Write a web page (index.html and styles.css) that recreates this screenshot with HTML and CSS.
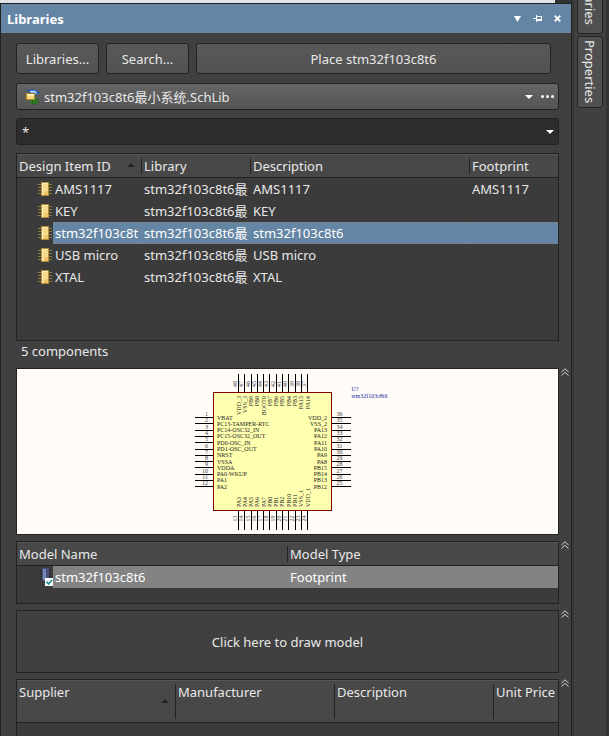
FILE: index.html
```html
<!DOCTYPE html>
<html lang="en">
<head>
<meta charset="utf-8">
<meta name="viewport" content="width=device-width, initial-scale=1">
<title>Libraries</title>
<link rel="stylesheet" href="styles.css">
</head>
<body>
<svg class="defs" aria-hidden="true">
  <symbol id="chip" viewBox="0 0 14 14">
    <path d="M0 2.500h14M0 5.500h14M0 8.500h14M0 11.500h14" stroke="#8d7c37"/>
    <path d="M3 0h8v14H3z" fill="#b08d38"/>
    <path d="M4 1h6v12H4z" fill="#f6d98a"/>
    <path d="M4 1h6v1H4zM4 2h1v11H4z" fill="#fdeec0"/>
    <path d="M7 9h3v4H6z" fill="#efc566"/>
  </symbol>
  <symbol id="up" viewBox="0 0 8 8">
    <path d="M.5 4 4 .8 7.500 4M.5 7.500 4 4.300 7.500 7.500" fill="none" stroke="#d0d0d0"/>
  </symbol>
  <symbol id="caret" viewBox="0 0 8 4"><path d="M0 0h8L4 4z" fill="#fff"/></symbol>
  <symbol id="sort" viewBox="0 0 8 4"><path d="M0 4h8L4 0z" fill="#222"/></symbol>
</svg>
<div class="app">
  <main class="dock">
    <div class="strip"></div>
    <section class="panel">
      <header class="titlebar">
        <h1>Libraries</h1>
        <button class="tool" aria-label="Panel menu"><svg width="7" height="6" viewBox="0 0 7 6"><path d="M0 0h7L3.500 6z" fill="#fff"/></svg></button>
        <button class="tool" aria-label="Pin"><svg width="9" height="7" viewBox="0 0 9 7"><path d="M0 3h3V0h1v1h5v5H4v1H3V4H0zM4 2v2h4V2z" fill="#fff" fill-rule="evenodd"/></svg></button>
        <button class="tool" aria-label="Close"><svg width="7" height="7" viewBox="0 0 7 7"><path d="m.7.7 5.600 5.600m0-5.600L.7 6.300" stroke="#fff" stroke-width="1.800"/></svg></button>
      </header>
      <div class="content">
        <div class="actions">
          <button class="btn">Libraries...</button>
          <button class="btn">Search...</button>
          <button class="btn btn-wide">Place stm32f103c8t6</button>
        </div>
        <div class="field library">
          <svg class="lib-icon" width="16" height="16" viewBox="0 0 16 16" aria-hidden="true">
            <path d="M2 1.500h4M12 3.500h4" stroke="#1554b8"/>
            <path d="M6 1h5q2 0 3 3-1 2-3 2H6z" fill="#78a8f0" stroke="#1c50b0"/>
            <path d="M6 2h5l1 1H6z" fill="#c4dcff"/>
            <path d="M5 10.500h10M5 13.500h10" stroke="#1d6a18"/>
            <path d="M7 9h6v6H7z" fill="#2c8420"/>
            <path d="M8.500 11v5M11.500 11v5" stroke="#1b5c16"/>
            <path d="M0 6.500h12M0 9.500h12" stroke="#7d651c"/>
            <path d="M2.500 4.500h8v6h-8z" fill="#f6d878" stroke="#a98424"/>
            <path d="M3 5h7v2H3z" fill="#fff0ba"/>
          </svg>
          <select aria-label="Library"><option>stm32f103c8t6最小系统.SchLib</option></select>
          <svg class="caret" width="8" height="4"><use href="#caret"/></svg>
          <button class="more" aria-label="More"><svg width="13" height="3" viewBox="0 0 13 3"><circle cx="1.500" cy="1.500" r="1.500" fill="#fff"/><circle cx="6.500" cy="1.500" r="1.500" fill="#fff"/><circle cx="11.500" cy="1.500" r="1.500" fill="#fff"/></svg></button>
        </div>
        <div class="field filter">
          <input type="text" value="*" aria-label="Filter">
          <button class="more" aria-label="Filter history"><svg width="8" height="4"><use href="#caret"/></svg></button>
        </div>
        <div class="box components">
          <table>
            <colgroup><col class="c-icon"><col class="c-name"><col class="c-lib"><col><col class="c-foot"></colgroup>
            <thead><tr><th colspan="2">Design Item ID<svg class="sort" width="8" height="4"><use href="#sort"/></svg></th><th>Library</th><th>Description</th><th>Footprint</th></tr></thead>
            <tbody>
              <tr><td class="icon"><svg width="14" height="14"><use href="#chip"/></svg></td><td class="name"><span>AMS1117</span></td><td><span>stm32f103c8t6最</span></td><td><span>AMS1117</span></td><td><span>AMS1117</span></td></tr>
              <tr><td class="icon"><svg width="14" height="14"><use href="#chip"/></svg></td><td class="name"><span>KEY</span></td><td><span>stm32f103c8t6最</span></td><td><span>KEY</span></td><td></td></tr>
              <tr class="selected"><td class="icon"><svg width="14" height="14"><use href="#chip"/></svg></td><td class="name"><span>stm32f103c8t</span></td><td><span>stm32f103c8t6最</span></td><td><span>stm32f103c8t6</span></td><td></td></tr>
              <tr><td class="icon"><svg width="14" height="14"><use href="#chip"/></svg></td><td class="name"><span>USB micro</span></td><td><span>stm32f103c8t6最</span></td><td><span>USB micro</span></td><td></td></tr>
              <tr><td class="icon"><svg width="14" height="14"><use href="#chip"/></svg></td><td class="name"><span>XTAL</span></td><td><span>stm32f103c8t6最</span></td><td><span>XTAL</span></td><td></td></tr>
            </tbody>
          </table>
        </div>
        <p class="status">5 components</p>
        <div class="section">
          <div class="box preview">
            <svg viewBox="0 0 1082 330" role="img" aria-label="Schematic symbol">
              <rect x="393" y="47" width="236" height="236" fill="#ffffb0" stroke="#800000" stroke-width="2"/>
              <path class="pins" d="M356 97h36M356 109h36M356 122h36M356 134h36M356 147h36M356 160h36M356 172h36M356 185h36M356 197h36M356 210h36M356 222h36M356 235h36M630 97h37M630 109h37M630 122h37M630 134h37M630 147h37M630 160h37M630 172h37M630 185h37M630 197h37M630 210h37M630 222h37M630 235h37M443 10v36M455 10v36M468 10v36M480 10v36M493 10v36M505 10v36M518 10v36M530 10v36M543 10v36M556 10v36M568 10v36M581 10v36M443 284v37M455 284v37M468 284v37M480 284v37M493 284v37M505 284v37M518 284v37M530 284v37M543 284v37M556 284v37M568 284v37M581 284v37"/>
              <text><tspan x="400" y="101">VBAT</tspan><tspan x="400" y="113">PC13-TAMPER-RTC</tspan><tspan x="400" y="126">PC14-OSC32_IN</tspan><tspan x="400" y="138">PC15-OSC32_OUT</tspan><tspan x="400" y="151">PD0-OSC_IN</tspan><tspan x="400" y="164">PD1-OSC_OUT</tspan><tspan x="400" y="176">NRST</tspan><tspan x="400" y="189">VSSA</tspan><tspan x="400" y="201">VDDA</tspan><tspan x="400" y="214">PA0-WKUP</tspan><tspan x="400" y="226">PA1</tspan><tspan x="400" y="239">PA2</tspan></text>
              <text class="end"><tspan x="620" y="101">VDD_2</tspan><tspan x="620" y="113">VSS_2</tspan><tspan x="620" y="126">PA13</tspan><tspan x="620" y="138">PA12</tspan><tspan x="620" y="151">PA11</tspan><tspan x="620" y="164">PA10</tspan><tspan x="620" y="176">PA9</tspan><tspan x="620" y="189">PA8</tspan><tspan x="620" y="201">PB15</tspan><tspan x="620" y="214">PB14</tspan><tspan x="620" y="226">PB13</tspan><tspan x="620" y="239">PB12</tspan></text>
              <text class="end num"><tspan x="382" y="94">1</tspan><tspan x="382" y="106">2</tspan><tspan x="382" y="119">3</tspan><tspan x="382" y="131">4</tspan><tspan x="382" y="144">5</tspan><tspan x="382" y="157">6</tspan><tspan x="382" y="169">7</tspan><tspan x="382" y="182">8</tspan><tspan x="382" y="194">9</tspan><tspan x="382" y="207">10</tspan><tspan x="382" y="219">11</tspan><tspan x="382" y="232">12</tspan></text>
              <text class="num"><tspan x="639" y="94">36</tspan><tspan x="639" y="106">35</tspan><tspan x="639" y="119">34</tspan><tspan x="639" y="131">33</tspan><tspan x="639" y="144">32</tspan><tspan x="639" y="157">31</tspan><tspan x="639" y="169">30</tspan><tspan x="639" y="182">29</tspan><tspan x="639" y="194">28</tspan><tspan x="639" y="207">27</tspan><tspan x="639" y="219">26</tspan><tspan x="639" y="232">25</tspan></text>
              <g transform="rotate(-90)">
                <text class="end"><tspan x="-54" y="447">VDD_3</tspan><tspan x="-54" y="459">VSS_3</tspan><tspan x="-54" y="472">PB9</tspan><tspan x="-54" y="484">PB8</tspan><tspan x="-54" y="497">BOOT0</tspan><tspan x="-54" y="509">PB7</tspan><tspan x="-54" y="522">PB6</tspan><tspan x="-54" y="534">PB5</tspan><tspan x="-54" y="547">PB4</tspan><tspan x="-54" y="560">PB3</tspan><tspan x="-54" y="572">PA15</tspan><tspan x="-54" y="585">PA14</tspan></text>
                <text><tspan x="-276" y="447">PA3</tspan><tspan x="-276" y="459">PA4</tspan><tspan x="-276" y="472">PA5</tspan><tspan x="-276" y="484">PA6</tspan><tspan x="-276" y="497">PA7</tspan><tspan x="-276" y="509">PB0</tspan><tspan x="-276" y="522">PB1</tspan><tspan x="-276" y="534">PB2</tspan><tspan x="-276" y="547">PB10</tspan><tspan x="-276" y="560">PB11</tspan><tspan x="-276" y="572">VSS_1</tspan><tspan x="-276" y="585">VDD_1</tspan></text>
                <text class="num"><tspan x="-36" y="440">48</tspan><tspan x="-36" y="452">47</tspan><tspan x="-36" y="465">46</tspan><tspan x="-36" y="477">45</tspan><tspan x="-36" y="490">44</tspan><tspan x="-36" y="502">43</tspan><tspan x="-36" y="515">42</tspan><tspan x="-36" y="527">41</tspan><tspan x="-36" y="540">40</tspan><tspan x="-36" y="553">39</tspan><tspan x="-36" y="565">38</tspan><tspan x="-36" y="578">37</tspan></text>
                <text class="num"><tspan x="-305" y="440">13</tspan><tspan x="-305" y="452">14</tspan><tspan x="-305" y="465">15</tspan><tspan x="-305" y="477">16</tspan><tspan x="-305" y="490">17</tspan><tspan x="-305" y="502">18</tspan><tspan x="-305" y="515">19</tspan><tspan x="-305" y="527">20</tspan><tspan x="-305" y="540">21</tspan><tspan x="-305" y="553">22</tspan><tspan x="-305" y="565">23</tspan><tspan x="-305" y="578">24</tspan></text>
              </g>
              <text class="ref"><tspan x="669" y="44">U?</tspan><tspan x="669" y="57">stm32f103c8t6</tspan></text>
            </svg>
          </div>
          <button class="collapse" aria-label="Collapse preview"><svg width="8" height="8"><use href="#up"/></svg></button>
        </div>
        <div class="section">
          <div class="box models">
            <table>
              <colgroup><col class="c-icon"><col class="c-model"><col></colgroup>
              <thead><tr><th colspan="2">Model Name</th><th>Model Type</th></tr></thead>
              <tbody><tr class="active"><td class="icon model-icon"><svg width="13" height="18" viewBox="0 0 13 18"><path d="M0 2.500h11M0 5.500h11M0 8.500h11M0 11.500h11" stroke="#25253d"/><path d="M2 0h7v13H2z" fill="#485078"/><path d="M3 1h3v11H3z" fill="#7886b8"/><path d="M5 10h8v8H5z" fill="#fff"/><path d="m6.500 13.500 2 2.500 3.500-4" fill="none" stroke="#178c94" stroke-width="1.600"/></svg></td><td class="name"><span>stm32f103c8t6</span></td><td><span>Footprint</span></td></tr></tbody>
            </table>
          </div>
          <button class="collapse" aria-label="Collapse models"><svg width="8" height="8"><use href="#up"/></svg></button>
        </div>
        <div class="section">
          <button class="box draw">Click here to draw model</button>
          <button class="collapse" aria-label="Collapse model view"><svg width="8" height="8"><use href="#up"/></svg></button>
        </div>
        <div class="section fill">
          <div class="box suppliers">
            <table>
              <colgroup><col class="c-first"><col class="c-sup"><col class="c-sup"><col></colgroup>
              <thead><tr><th>Supplier<svg class="sort" width="8" height="4"><use href="#sort"/></svg></th><th>Manufacturer</th><th>Description</th><th>Unit Price</th></tr></thead>
            </table>
          </div>
          <button class="collapse" aria-label="Collapse suppliers"><svg width="8" height="8"><use href="#up"/></svg></button>
        </div>
      </div>
    </section>
  </main>
  <nav class="rail" aria-label="Panels">
    <button class="tab">Libraries</button>
    <button class="tab">Properties</button>
  </nav>
</div>
</body>
</html>
```
FILE: styles.css
```css
* {
  box-sizing: border-box;
}

body {
  margin: 0;
  background: #404040;
}

body,
button,
input,
select {
  color: #e8e8e8;
  font: 13px/20px "Noto Sans", "Noto Sans CJK SC", sans-serif;
}

button,
input,
select {
  margin: 0;
  padding: 0;
  border: 0;
  background: none;
}

svg {
  display: block;
}

.defs {
  position: absolute;
  width: 0;
  height: 0;
}

.app {
  display: flex;
  height: 100vh;
  min-height: 700px;
  overflow: hidden;
}

.dock {
  display: flex;
  flex: 1;
  flex-direction: column;
  min-width: 0;
  background: #333;
}

.strip {
  height: 3px;
  margin-right: 17px;
  background: #e2e2e6;
}

.panel {
  display: flex;
  flex: 1;
  flex-direction: column;
  border: 1px solid #222;
  border-bottom: 0;
  background: #404040;
}

.titlebar {
  display: flex;
  align-items: center;
  height: 29px;
  padding: 0 4px 0 6px;
  background: #6485a4;
}

.titlebar h1 {
  flex: 1;
  margin: 0;
  color: #fff;
  font-size: 13px;
  font-weight: 700;
}

.tool {
  display: grid;
  place-items: center;
  width: 20px;
  height: 20px;
}

.content {
  display: flex;
  flex: 1;
  flex-direction: column;
  padding: 10px 0 0 15px;
}

.actions {
  display: flex;
  gap: 7px;
  margin: 0 20px 9px 0;
}

.btn {
  width: 83px;
  height: 31px;
  border: 1px solid #222;
  border-radius: 3px;
  background: linear-gradient(#595959, #525252);
}

.btn-wide {
  flex: 1;
}

.field {
  display: flex;
  align-items: center;
  height: 27px;
  margin: 0 12px 8px 0;
  border: 1px solid #222;
  border-radius: 3px;
}

.library {
  padding: 0 4px 0 7px;
  background: linear-gradient(#656565, #545454);
}

.library select {
  flex: 1;
  min-width: 0;
  margin-left: 4px;
  appearance: none;
}

.filter {
  padding: 0 4px 0 5px;
  background: #2d2d2d;
}

.filter input {
  flex: 1;
  min-width: 0;
}

.more {
  display: flex;
  justify-content: flex-end;
}

.library .more {
  width: 21px;
}

.box {
  flex: 1;
  min-width: 0;
  border: 1px solid #222;
  background: #3b3b3b;
}

.components {
  flex: none;
  height: 188px;
  margin-right: 12px;
}

table {
  width: 100%;
  table-layout: fixed;
  border-spacing: 0;
}

.c-icon {
  width: 36px;
}

.c-name {
  width: 88px;
}

.c-lib {
  width: 109px;
}

.c-foot {
  width: 89px;
}

.c-model {
  width: 234px;
}

.c-first {
  width: 158px;
}

.c-sup {
  width: 159px;
}

th {
  position: relative;
  height: 24px;
  padding: 0 3px;
  border-top: 1px solid #565656;
  border-bottom: 1px solid #222;
  background: #484848;
  font-weight: 400;
  text-align: left;
  white-space: nowrap;
}

th:first-child {
  padding-left: 2px;
}

th + th::before {
  position: absolute;
  top: 3px;
  bottom: 3px;
  left: 0;
  width: 1px;
  background: #222;
  content: "";
}

.sort {
  position: absolute;
  right: 6px;
  top: 8px;
}

td {
  height: 22px;
  padding: 0 0 0 3px;
}

td span {
  display: block;
  overflow: hidden;
  white-space: nowrap;
}

.name {
  padding-left: 2px;
}

.icon {
  padding: 0 0 0 21px;
}

.model-icon {
  padding-left: 23px;
}

.selected td:not(.icon) {
  border: 0 dotted #8a8078;
  border-width: 1px 0;
  background: #6485a4;
  color: #fff;
}

.active td:not(.icon) {
  background: #838383;
  color: #fff;
}

.status {
  margin: 0 0 6px;
  padding-left: 5px;
  line-height: 21px;
}

.section {
  display: flex;
  align-items: flex-start;
  margin-bottom: 6px;
}

.preview {
  background: #fffcf8;
}

.preview svg {
  width: 100%;
  height: auto;
}

.preview text {
  fill: #222;
  font: 12px "Liberation Serif", serif;
}

.preview .end {
  text-anchor: end;
}

.preview .num {
  fill: #444;
}

.preview .ref {
  fill: #1c1c9c;
}

.pins {
  stroke: #000;
  stroke-width: 2;
  shape-rendering: crispEdges;
}

.collapse {
  display: flex;
  justify-content: center;
  width: 12px;
}

.models,
.draw {
  height: 63px;
}

.draw {
  background: #404040;
}

.fill {
  flex: 1;
  align-items: stretch;
  margin-bottom: 0;
}

.suppliers {
  border-bottom: 0;
}

.suppliers th {
  height: 43px;
  padding-top: 1px;
  vertical-align: top;
}

.suppliers .sort {
  top: 18px;
}

.fill .collapse {
  align-items: flex-start;
}

.rail {
  display: flex;
  flex-direction: column;
  gap: 2px;
  width: 37px;
  padding-left: 3px;
  overflow: hidden;
  border-right: 3px solid #333;
  border-left: 2px solid #383838;
}

.tab {
  width: 26px;
  height: 72px;
  border: 1px solid #222;
  border-radius: 3px;
  background: #505050;
  writing-mode: vertical-rl;
}

.tab:first-child {
  margin-top: -38px;
}
```
